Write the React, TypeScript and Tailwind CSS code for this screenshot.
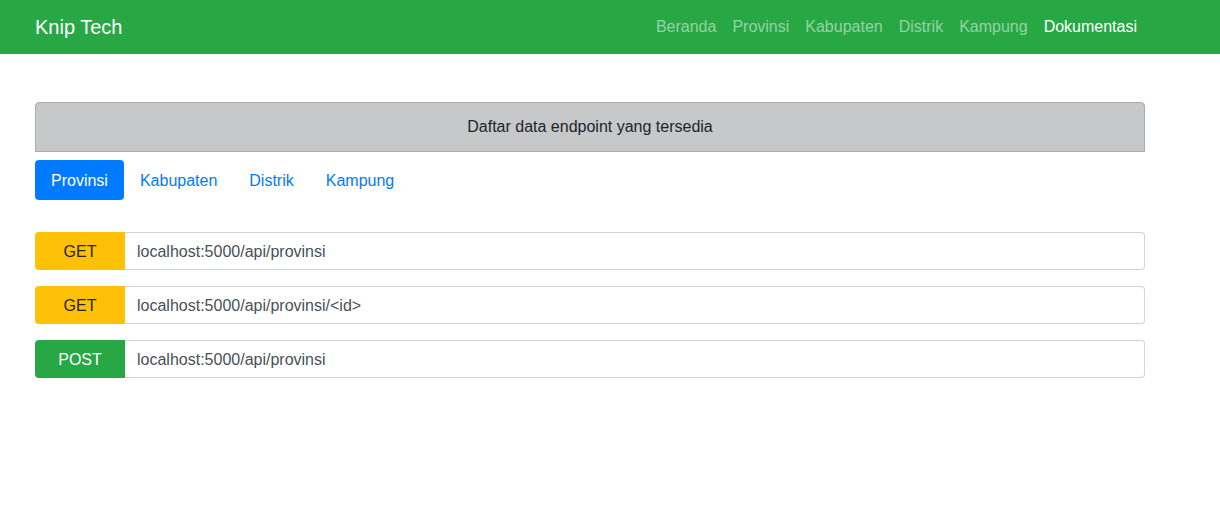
import { useState } from "react"

const tabs = ["Provinsi", "Kabupaten", "Distrik", "Kampung"]
const navLinks = ["Beranda", "Provinsi", "Kabupaten", "Distrik", "Kampung", "Dokumentasi"]

const endpoints: Record<string, { method: string; path: string }[]> = {
  Provinsi: [
    { method: "GET", path: "localhost:5000/api/provinsi" },
    { method: "GET", path: "localhost:5000/api/provinsi/<id>" },
    { method: "POST", path: "localhost:5000/api/provinsi" },
  ],
  Kabupaten: [
    { method: "GET", path: "localhost:5000/api/kabupaten" },
    { method: "GET", path: "localhost:5000/api/kabupaten/<id>" },
    { method: "POST", path: "localhost:5000/api/kabupaten" },
  ],
  Distrik: [
    { method: "GET", path: "localhost:5000/api/distrik" },
    { method: "GET", path: "localhost:5000/api/distrik/<id>" },
    { method: "POST", path: "localhost:5000/api/distrik" },
  ],
  Kampung: [
    { method: "GET", path: "localhost:5000/api/kampung" },
    { method: "GET", path: "localhost:5000/api/kampung/<id>" },
    { method: "POST", path: "localhost:5000/api/kampung" },
  ],
}

export default function App() {
  const [active, setActive] = useState("Provinsi")

  return (
    <div className="min-h-screen bg-white font-['Liberation_Sans',Arial,sans-serif] text-base text-[#212529]">
      <nav className="h-[54px] bg-[#28a745]">
        <div className="w-[1110px] ml-[35px] h-full flex items-center justify-between">
          <a href="#" className="text-[20px] text-white leading-[30px]">Knip Tech</a>
          <ul className="flex">
            {navLinks.map((l) => (
              <li key={l}>
                <a
                  href="#"
                  className={
                    l === "Dokumentasi"
                      ? "block px-2 py-2 leading-6 text-white"
                      : "block px-2 py-2 leading-6 text-white/50"
                  }
                >
                  {l}
                </a>
              </li>
            ))}
          </ul>
        </div>
      </nav>

      <div className="w-[1110px] ml-[35px] mt-12">
        <div className="h-[50px] flex items-center justify-center bg-[#c6c8ca] border border-[#a9abad] rounded-t-[4px]">
          Daftar data endpoint yang tersedia
        </div>

        <ul className="flex mt-2">
          {tabs.map((t) => (
            <li key={t}>
              <button
                onClick={() => setActive(t)}
                className={
                  t === active
                    ? "block px-4 pt-[9px] pb-[7px] leading-6 rounded-[4px] bg-[#007bff] text-white"
                    : "block px-4 pt-[9px] pb-[7px] leading-6 rounded-[4px] text-[#007bff]"
                }
              >
                {t}
              </button>
            </li>
          ))}
        </ul>

        <div className="mt-8 flex flex-col gap-4">
          {endpoints[active].map((e, i) => (
            <div key={i} className="flex h-[38px]">
              <div
                className={
                  e.method === "POST"
                    ? "w-[90px] flex items-center justify-center pt-px rounded-l-[4px] bg-[#28a745] text-white"
                    : "w-[90px] flex items-center justify-center pt-px rounded-l-[4px] bg-[#ffc107] text-[#212529]"
                }
              >
                {e.method}
              </div>
              <div className="flex-1 flex items-center px-3 pt-px border border-l-0 border-[#ced4da] rounded-r-[4px] text-[#495057]">
                {e.path}
              </div>
            </div>
          ))}
        </div>
      </div>
    </div>
  )
}
